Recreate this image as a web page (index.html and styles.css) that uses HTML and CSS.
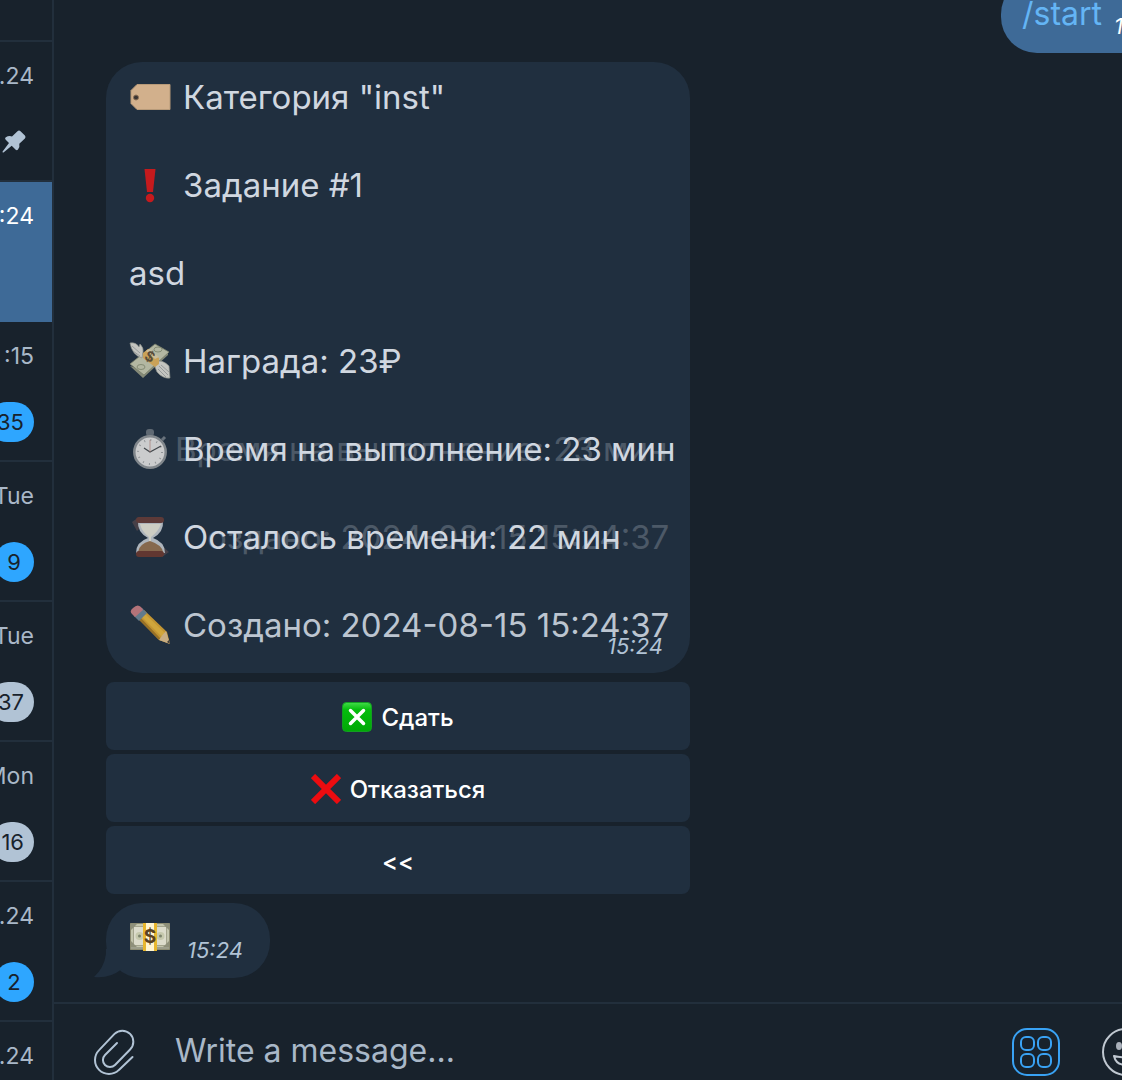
FILE: index.html
```html
<!DOCTYPE html>
<html lang="ru">
<head>
<meta charset="utf-8">
<meta name="viewport" content="width=device-width, initial-scale=1">
<title>Chat</title>
<link rel="stylesheet" href="styles.css">
</head>
<body>
<div class="app">
  <nav class="sidebar" aria-label="Chats">
    <div class="chat chat-cut"></div>
    <a class="chat" href="#"><time>.24</time>
      <svg class="pin" viewBox="0 0 26 26" aria-hidden="true"><path fill="#b1c3d5" d="M16.500 2.200q1.500-1.200 3 0l4.400 4.400q1.300 1.500 0 2.900l-5.600 5.200q.8 3.200-1.300 5.900-1.200 1.100-2.300.1l-4-3.900-8.200 6.600q-1.300.4-.9-.9l6.400-8.400-3.500-3.500q-1-1.300.3-2.300 2.800-1.800 6.200-.9z"/></svg></a>
    <a class="chat chat-active" href="#"><time>:24</time></a>
    <a class="chat" href="#"><time>:15</time><span class="badge">35</span></a>
    <a class="chat" href="#"><time>Tue</time><span class="badge">9</span></a>
    <a class="chat" href="#"><time>Tue</time><span class="badge badge-muted">37</span></a>
    <a class="chat" href="#"><time>Mon</time><span class="badge badge-muted">16</span></a>
    <a class="chat" href="#"><time>.24</time><span class="badge">2</span></a>
    <a class="chat" href="#"><time>.24</time></a>
  </nav>

  <main class="conversation">
    <div class="messages">
      <div class="bubble short sent"><a href="#">/start</a><time class="sent-time">15:24</time></div>

      <article class="bubble task">
        <p><svg class="emoji" viewBox="0 0 42 42" aria-hidden="true"><path fill="#d2b08c" stroke="#b79a79" d="M8 8.500h33v25H8l-6-6v-13z"/><circle cx="7" cy="21.500" r="2.500" fill="#3a3433" stroke="#8f7257"/></svg>Категория "inst"</p>
        <p><svg class="emoji" viewBox="0 0 42 42" aria-hidden="true"><path fill="#c51a1d" d="M15.500 5h11l-2.500 23h-6z"/><circle cx="21" cy="34" r="4.200" fill="#c51a1d"/></svg>Задание #1</p>
        <p>asd</p>
        <p><svg class="emoji" viewBox="0 0 42 42" aria-hidden="true">
          <path fill="#858a78" d="M1 26l13 12 25-23v-4L16 30z"/>
          <path fill="#b3b7a2" stroke="#777d69" stroke-width=".8" d="M1 24l25-20 14 8-25 23z"/>
          <ellipse cx="29" cy="9.500" rx="4" ry="2.500" fill="none" stroke="#858c75"/><ellipse cx="12" cy="27" rx="4" ry="2.500" fill="none" stroke="#858c75"/>
          <path fill="#c4c5c0" stroke="#8b8f88" stroke-width=".7" d="M1 3q6-1 9 4l1-3q4 4 3 8l-1 6Q3 15 1 3zM27 22q6-3 13 4l1 12q-7 1-13-6l-2-5z"/>
          <path stroke="#8b9092" stroke-width=".8" fill="none" d="M3 6l8 7M4 11l7 5M30 26l9 9M29 29l8 8M32 25l8 7"/>
          <path fill="#caa258" d="M14 13l5-4 11 9v6l-4 3-12-9z"/><path fill="#c9bd9d" d="M17 11l9 8 4-2-10-8z"/>
          <text x="16" y="21" class="dollar" transform="rotate(28 20 17)">$</text></svg>Награда: 23₽</p>
        <p><svg class="emoji" viewBox="0 0 42 42" aria-hidden="true">
          <rect x="17" y="1" width="8" height="7" rx="3" fill="#5f6973"/><path stroke="#68727c" stroke-width="3" d="M33 12l3-3"/>
          <circle cx="21" cy="24" r="15.700" fill="#cbcccd" stroke="#81878c" stroke-width="2.500"/>
          <circle cx="21" cy="24" r="12" fill="none" stroke="#909497" stroke-width="2" stroke-dasharray="1 5.280"/>
          <path stroke="#42474b" stroke-width="1.200" fill="none" d="M15 20l6 4 11-6"/><path stroke="#a67c77" stroke-width=".7" d="M21 12v12"/></svg>
          <span class="layered">Время на выполнение: 23 мин<span class="echo echo-shifted" aria-hidden="true">Время на выполнение: 23 мин</span></span></p>
        <p><svg class="emoji" viewBox="0 0 42 42" aria-hidden="true">
          <path fill="#6c5152" opacity=".5" d="M3 6l7-5 3 9-5 5zM32 29l8 7-7 5z"/>
          <path fill="#aeb5bc" d="M9 5h25q1 11-10 17 12 4 12 15H7q0-11 12-15Q8 16 9 5z"/>
          <path fill="#cdcdc3" d="M11 8h21q-3 8-10 13v15h-2V21q-7-5-9-13z"/><path fill="#86694e" d="M9 36q1-8 12-11 12 4 13 11z"/>
          <rect x="7" y="1" width="28" height="6" rx="3" fill="#5d3a38"/><rect x="7" y="35" width="28" height="6" rx="3" fill="#613731"/></svg>
          <span class="layered">Осталось времени: 22 мин<span class="echo" aria-hidden="true">Создано: 2024-08-15 15:24:37</span></span></p>
        <p class="dim"><svg class="emoji" viewBox="0 0 42 42" aria-hidden="true">
          <path fill="#c39532" d="M8 13l7-7 23 22 3 12-11-4z"/><path fill="#d0a63c" d="M11 11l3-3 23 22-3 4z"/><path fill="#987126" d="M8 14l2-2 22 23-2 1z"/>
          <path fill="#c8ad82" d="M30 36q3-5 7-9l4 13z"/><path fill="#3d3937" d="M38 38l2-2 1 4z"/>
          <path fill="#627a8c" d="M5 12l8-8 5 5-8 8z"/><path fill="#b37379" d="M3 10Q0 7 4 4q5-5 9 0l1 2-8 7z"/></svg>Создано: 2024-08-15 15:24:37</p>
        <time class="task-time">15:24</time>
      </article>

      <div class="keyboard">
        <button type="button"><svg viewBox="0 0 30 30" aria-hidden="true"><defs><linearGradient id="green" x2="0" y2="1"><stop stop-color="#42dc49"/><stop offset=".25" stop-color="#05bd0d"/><stop offset="1" stop-color="#00a806"/></linearGradient></defs><rect x=".5" y=".5" width="29" height="29" rx="4" fill="url(#green)" stroke="#139e22"/><path stroke="#fff" stroke-width="3.500" stroke-linecap="round" d="M8.500 8.500l13 13m0-13l-13 13"/></svg>Сдать</button>
        <button type="button"><svg viewBox="0 0 30 30" aria-hidden="true"><path stroke="#ec0c10" stroke-width="6" d="M2 2l26 26M28 2L2 28"/></svg>Отказаться</button>
        <button type="button">&lt;&lt;</button>
      </div>

      <div class="bubble short received">
        <svg class="tail" viewBox="0 0 28 30" aria-hidden="true"><path fill="#202f3f" d="M12 0v5Q10 19 0 28q15 2 28-8V0z"/></svg>
        <svg class="emoji" viewBox="0 0 42 42" aria-hidden="true">
          <path fill="#c3c5ad" stroke="#8c8c72" d="M1.500 7.500h39v26h-39z"/><path fill="#dcdccb" stroke="#a3a48d" d="M4.500 10.500h33v19h-33z"/>
          <path fill="#8e907a" d="M2 8h6L2 14zM40 8h-6l6 6zM2 31v-6l6 6zM40 31v-6l-6 6z"/>
          <path stroke="#77796a" d="M2 32h38"/><circle cx="10.500" cy="20" r="4" fill="#c6c9ad"/><circle cx="31.500" cy="20" r="4" fill="#c6c9ad"/><circle cx="10.500" cy="20" r="1.500" fill="#7d856d"/><circle cx="31.500" cy="20" r="1.500" fill="#7d856d"/>
          <path fill="#e8b72e" d="M14 7h14v28H14z"/><path fill="#fff5d1" d="M17 7h8v28h-8z"/><text x="21" y="27" text-anchor="middle" class="dollar dollar-large">$</text></svg>
        <time>15:24</time>
      </div>
    </div>

    <form class="composer">
      <button type="button" class="tool clip" aria-label="Attach"><svg viewBox="0 0 48 48" fill="none" stroke="#b1c3d5" stroke-width="2" stroke-linecap="round"><path d="M42.500 28L28.900 40.900A14 14 0 0 1 9.100 21.100L24.500 4.900A11 11 0 0 1 40.100 20.500L25 36A7 7 0 0 1 15 26L27 14" transform="translate(0 1)"/></svg></button>
      <input type="text" aria-label="Message" placeholder="Write a message...">
      <button type="button" class="tool" aria-label="Bot keyboard"><svg viewBox="0 0 48 48" fill="none" stroke="#39a2f4" stroke-width="2"><rect x="1" y="1" width="46" height="46" rx="14"/><g><rect x="9" y="9" width="13" height="13" rx="5"/><rect x="26" y="9" width="13" height="13" rx="5"/><rect x="9" y="26" width="13" height="13" rx="5"/><rect x="26" y="26" width="13" height="13" rx="5"/></g></svg></button>
      <button type="button" class="tool" aria-label="Emoji"><svg viewBox="0 0 48 48" fill="none" stroke="#c0c8d1" stroke-width="2"><circle cx="24" cy="24" r="23"/><ellipse cx="17" cy="18" rx="3" ry="4" fill="#a9b0ba" stroke="none"/><ellipse cx="31" cy="18" rx="3" ry="4" fill="#a9b0ba" stroke="none"/><path stroke-linejoin="round" d="M12 28q12 3 24 0-2 9-12 9t-12-9z"/></svg></button>
    </form>
  </main>
</div>
</body>
</html>
```
FILE: styles.css
```css
* { box-sizing: border-box; }
body { margin: 0; background: #18222c; font-family: Inter, "Noto Sans", sans-serif; overflow: hidden; }
a { text-decoration: none; }
svg { display: block; flex: none; }
button { border: 0; padding: 0; font: inherit; cursor: pointer; }
.app { display: flex; height: 100vh; }

.sidebar { flex: 0 0 54px; border-right: 2px solid #222f3c; overflow: hidden; }
.chat {
  display: flex; flex-direction: column; align-items: flex-end; justify-content: space-between;
  height: 140px; padding: 18px 18px 18px 0; border-bottom: 2px solid #222f3c;
  color: #a9b8c8; font-size: 23px; line-height: 32px; white-space: nowrap;
}
.chat-cut { height: 42px; padding: 0; }
.chat-active { background: #3e6a97; border-color: #3e6a97; color: #fff; }
.badge {
  min-width: 40px; padding: 0 10px; border-radius: 20px; background: #2ea6ff;
  color: #18222c; font-size: 22px; line-height: 40px; text-align: center;
}
.badge-muted { background: #b1c3d5; }
.pin { width: 26px; height: 40px; margin-right: 7px; }

.conversation { flex: 1; min-width: 0; display: flex; flex-direction: column; overflow: hidden; }
.messages {
  flex: 1; min-height: 0; display: flex; flex-direction: column; justify-content: flex-end;
  align-items: flex-start; gap: 9px; padding: 0 0 24px 52px;
}
.bubble { position: relative; flex: none; border-radius: 36px; background: #202f3f; color: #d0d7e0; font-size: 33px; line-height: 44px; }
.bubble time { color: #b1c3d5; font-size: 22px; font-style: italic; line-height: 28px; }
.short { display: flex; align-items: flex-start; gap: 16px; height: 75px; padding: 13px 27px 0 23px; }
.short time { padding-top: 20px; }
.sent { align-self: flex-end; gap: 12px; margin-right: -75px; padding: 14px 27px 0 21px; background: #3e6a97; font-size: 32px; }
.sent a { color: #64b5f5; }
.sent .sent-time { color: #fff; }
.tail { position: absolute; left: -12px; bottom: -1px; width: 28px; height: 30px; }

.task { display: flex; flex-direction: column; gap: 44px; width: 584px; max-width: 100%; padding: 13px 23px 26px; }
.task p { display: flex; align-items: center; gap: 12px; margin: 0; white-space: nowrap; }
.task .dim { color: #bcc5d0; }
.emoji { width: 42px; height: 42px; }
.dollar { fill: #594d39; font: bold 14px Inter, sans-serif; }
.dollar-large { fill: #594222; font-size: 19px; }
.layered { position: relative; }
.echo { position: absolute; left: 0; top: 0; opacity: .25; }
.echo-shifted { left: -8px; }
.bubble .task-time { position: absolute; right: 27px; bottom: 13px; }

.keyboard { display: flex; flex-direction: column; gap: 4px; width: 584px; max-width: 100%; }
.keyboard button {
  display: flex; align-items: center; justify-content: center; gap: 9px; height: 68px; padding-top: 2px;
  border-radius: 8px; background: #202f3f; color: #fff; font-size: 24px; font-weight: 500;
}
.keyboard svg { width: 30px; height: 30px; }

.composer { flex: none; display: flex; align-items: flex-start; gap: 42px; height: 78px; margin-right: -28px; padding: 24px 0 0 36px; border-top: 2px solid #222f3c; }
.composer input { flex: 1; min-width: 0; height: 46px; padding: 0; border: 0; outline: 0; background: none; color: #fff; font: 32px/46px Inter, sans-serif; }
.composer input::placeholder { color: #a9b8c8; opacity: 1; }
.tool { flex: none; width: 48px; height: 48px; background: none; }
.clip { margin-right: -5px; }
```
